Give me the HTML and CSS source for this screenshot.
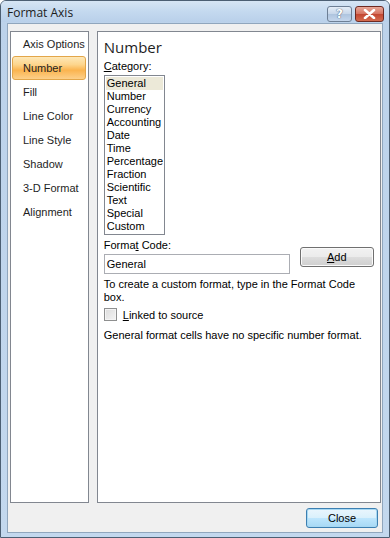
FILE: index.html
```html
<!DOCTYPE html>
<html lang="en">
<head>
  <meta charset="UTF-8" />
  <title>Format Axis</title>
  <link rel="stylesheet" href="styles.css">
</head>
<body>
  <div class="window">
    <div class="titlebar">
      <span class="title">Format Axis</span>
      <div class="caption-buttons">
        <span class="cap-btn help">?</span>
        <span class="cap-btn close">
          <svg width="13" height="10" viewBox="0 0 13 10">
            <path d="M2 1 L11 9 M11 1 L2 9" stroke="#fff" stroke-width="2.6" stroke-linecap="round"/>
          </svg>
        </span>
      </div>
    </div>

    <div class="client">
      <div class="panes">
        <ul class="nav">
          <li>Axis Options</li>
          <li class="selected">Number</li>
          <li>Fill</li>
          <li>Line Color</li>
          <li>Line Style</li>
          <li>Shadow</li>
          <li>3-D Format</li>
          <li>Alignment</li>
        </ul>

        <div class="page">
          <h1>Number</h1>
          <div class="label"><u>C</u>ategory:</div>
          <ul class="listbox">
            <li class="active">General</li>
            <li>Number</li>
            <li>Currency</li>
            <li>Accounting</li>
            <li>Date</li>
            <li>Time</li>
            <li>Percentage</li>
            <li>Fraction</li>
            <li>Scientific</li>
            <li>Text</li>
            <li>Special</li>
            <li>Custom</li>
          </ul>

          <div class="code-row">
            <div class="code-field">
              <div class="label">Forma<u>t</u> Code:</div>
              <div class="textbox">General</div>
            </div>
            <button class="btn add"><u>A</u>dd</button>
          </div>

          <p class="note">To create a custom format, type in the Format Code box.</p>

          <label class="check">
            <span class="box"></span>
            <span><u>L</u>inked to source</span>
          </label>

          <p class="note">General format cells have no specific number format.</p>
        </div>
      </div>

      <div class="footer">
        <button class="btn default">Close</button>
      </div>
    </div>
  </div>
</body>
</html>
```

FILE: styles.css
```css
body {
  margin: 0;
  background: #fff;
  font-family: "Liberation Sans", Arial, sans-serif;
  font-size: 11px;
  color: #000;
}

ul {
  list-style: none;
  margin: 0;
  padding: 0;
}

.window {
  width: 390px;
  height: 538px;
  box-sizing: border-box;
  border: 1px solid #4c5f73;
  border-radius: 6px 6px 0 0;
  background: linear-gradient(to bottom, #c7dbef 0, #bcd2ea 22px, #c3d8ee 100%);
  display: flex;
  flex-direction: column;
}

.titlebar {
  height: 21px;
  display: flex;
  align-items: center;
  justify-content: space-between;
  padding: 0 5px 0 6px;
  background: linear-gradient(to bottom, #d6e5f4 0%, #c4d9ef 50%, #b9d0ea 100%);
  border-radius: 5px 5px 0 0;
}

.title {
  font-family: "Open Sans", sans-serif;
  font-size: 12px;
  color: #1c1c1c;
  padding-top: 2px;
}

.caption-buttons {
  display: flex;
  gap: 3px;
  padding-top: 4px;
}

.cap-btn {
  height: 16px;
  box-sizing: border-box;
  border: 1px solid #6d7f95;
  border-radius: 3px;
  display: flex;
  align-items: center;
  justify-content: center;
}

.cap-btn.help {
  width: 25px;
  background: linear-gradient(to bottom, #e4edf7 0%, #c6d6e9 50%, #aec4de 51%, #c4d6ec 100%);
  color: #fff;
  font-family: "DejaVu Sans", sans-serif;
  font-weight: bold;
  font-size: 12px;
  text-shadow: 0 0 1px #4a5f77, 0 0 1px #4a5f77;
}

.cap-btn.close {
  width: 29px;
  border-color: #6e2a22;
  background: linear-gradient(to bottom, #e8a99a 0%, #d5715f 50%, #c24631 51%, #d46b4f 100%);
}

.client {
  flex: 1;
  margin: 1px 6px 4px 6px;
  border: 1px solid #90a6bd;
  background: #f0f0f0;
  padding: 7px 2px 0 2px;
  display: flex;
  flex-direction: column;
}

.panes {
  display: flex;
  gap: 8px;
  height: 472px;
}

.nav {
  width: 81px;
  box-sizing: border-box;
  border: 1px solid #828790;
  background: #fff;
  padding: 0 2px 0 1px;
}

.nav li {
  height: 24px;
  box-sizing: border-box;
  line-height: 22px;
  padding-left: 10px;
  white-space: nowrap;
  color: #1e1e1e;
  border: 1px solid transparent;
  border-radius: 3px;
}

.nav li.selected {
  border-color: #e3a649;
  background: linear-gradient(to bottom, #fee8b8 0%, #fdd58c 35%, #fbb44f 60%, #fdd08a 100%);
}

.page {
  flex: 1;
  border: 1px solid #828790;
  background: #fff;
  padding: 5px 6px 0 6px;
}

.page h1 {
  margin: 0 0 2px;
  font-family: "Open Sans", sans-serif;
  font-weight: normal;
  font-size: 15px;
  color: #1e1e1e;
  line-height: 20px;
}

.label {
  line-height: 14px;
  margin-bottom: 2px;
}

.listbox {
  width: 61px;
  height: 160px;
  box-sizing: border-box;
  border: 1px solid #828790;
  padding: 1px;
}

.listbox li {
  height: 13px;
  line-height: 13px;
  padding-left: 1px;
}

.listbox li.active {
  background: #ece9d8;
}

.code-row {
  display: flex;
  align-items: flex-start;
  margin-top: 3px;
}

.code-field {
  width: 186px;
}

.textbox {
  height: 20px;
  box-sizing: border-box;
  border: 1px solid #abadb3;
  line-height: 18px;
  padding-left: 2px;
}

.btn {
  font-family: "Liberation Sans", Arial, sans-serif;
  font-size: 11px;
  color: #000;
  height: 20px;
  padding: 0;
  border: 1px solid #707070;
  border-radius: 3px;
  background: linear-gradient(to bottom, #f2f2f2 0%, #ebebeb 50%, #dddddd 51%, #cfcfcf 100%);
  box-shadow: inset 0 0 0 1px #fafafa;
}

.btn.add {
  width: 74px;
  margin: 9px 0 0 10px;
}

.note {
  margin: 4px 0 0;
  line-height: 13px;
}

.check {
  display: flex;
  align-items: center;
  gap: 6px;
  margin-top: 3px;
  height: 15px;
}

.check .box {
  width: 13px;
  height: 13px;
  box-sizing: border-box;
  border: 1px solid #8e8f8f;
  background: linear-gradient(135deg, #dcdcdc 0%, #f4f4f4 100%);
  box-shadow: inset 0 0 0 1px #f4f4f4;
}

.check + .note {
  margin-top: 7px;
}

.footer {
  display: flex;
  justify-content: flex-end;
  padding: 5px 2px 0 0;
}

.btn.default {
  width: 72px;
  border-color: #3c7fb1;
  box-shadow: inset 0 0 0 1px #a7d8f3;
  background: linear-gradient(to bottom, #eaf6fd 0%, #d9f0fc 50%, #bee6fd 51%, #a7d9f5 100%);
}
```
